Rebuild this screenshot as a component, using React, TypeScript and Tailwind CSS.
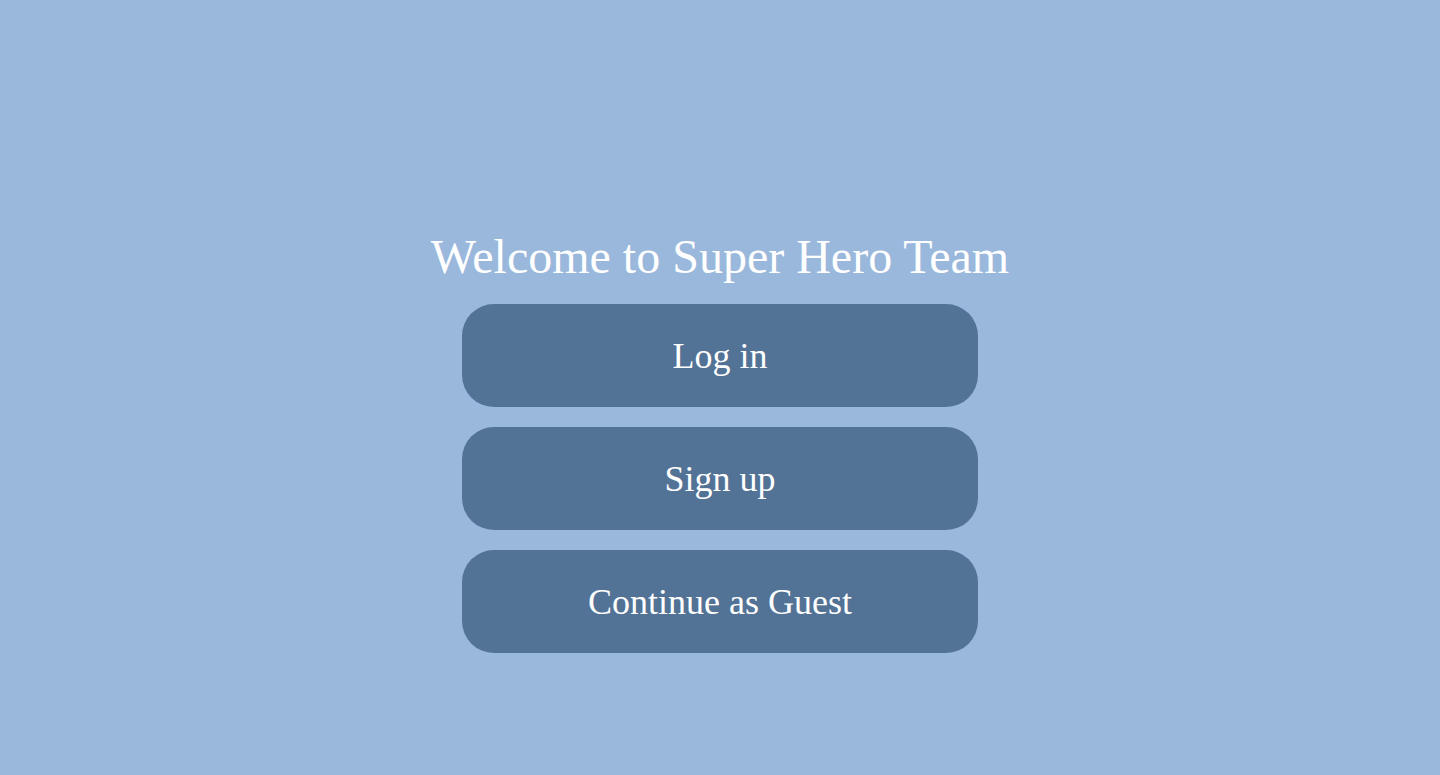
const options = ['Log in', 'Sign up', 'Continue as Guest']

const App = () => {
  return (
    <div className="w-full min-h-screen bg-[#9ab8dc] flex flex-col items-center pt-[229px] font-['Liberation_Serif',serif] text-white">
      <h1 className="text-[48px] leading-[55px] font-normal mb-[20px]">
        Welcome to Super Hero Team
      </h1>
      <div className="flex flex-col gap-[20px]">
        {options.map((label) => (
          <button
            key={label}
            className="w-[516px] h-[103px] rounded-[32px] bg-[#527296] text-[36px] text-white flex items-center justify-center cursor-pointer"
          >
            {label}
          </button>
        ))}
      </div>
    </div>
  )
}

export default App
